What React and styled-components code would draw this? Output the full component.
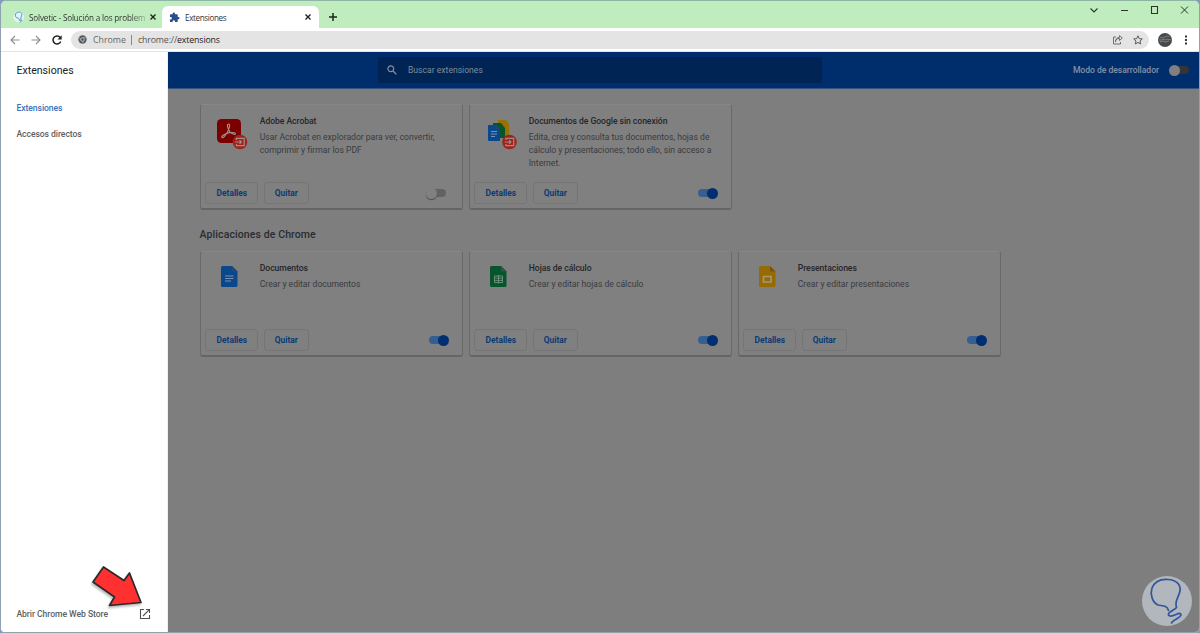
import React from "react";
import styled, { createGlobalStyle, css } from "styled-components";

const Global = createGlobalStyle`
  *{box-sizing:border-box}
  html,body{margin:0;padding:0}
  body{background:#7f9cc0;font-family:Roboto,"Liberation Sans",sans-serif;overflow:hidden}
  svg{display:block;flex:none}
`;

const Window = styled.div`
  position:relative;width:1200px;height:633px;display:flex;flex-direction:column;
  border:1px solid #92a1b0;border-top-color:#8fb5a5;border-radius:6px 6px 5px 5px;overflow:hidden;background:#fff;
`;
const TabStrip = styled.div`
  height:27px;flex:none;background:#bfedbd;display:flex;align-items:flex-end;
  font-family:"Open Sans","Noto Sans",sans-serif;font-size:8.1px;color:#333;
`;
const Tab = styled.div`
  height:22px;display:flex;align-items:center;white-space:nowrap;
  width:${p => p.$width}px;padding:0 ${p => p.$right || 7}px 0 ${p => p.$left}px;gap:5px;
  ${p => p.$active && css`background:#fff;border-radius:6px 6px 0 0;`}
`;
const TabLabel = styled.span`
  flex:1;letter-spacing:${p => p.$spacing || 0}px;
  ${p => p.$fade && css`mask-image:linear-gradient(90deg,#000 87%,#0004);`}
`;
const NewTab = styled.div`height:22px;display:flex;align-items:center;padding-left:10px;`;
const WindowButtons = styled.div`
  margin-left:auto;align-self:flex-start;height:17px;display:flex;align-items:center;gap:20px;padding-right:10px;
`;
const Toolbar = styled.div`
  height:24px;flex:none;display:flex;align-items:center;background:#fff;padding:0 11px 0 9px;border-bottom:1px solid #e2e4e6;
`;
const NavButtons = styled.div`display:flex;gap:10.500px;width:61px;flex:none;`;
const Reload = styled.svg`margin-left:1px;`;
const Address = styled.div`
  height:18px;width:1078px;border-radius:9px;background:#e4e4e4;display:flex;align-items:center;padding:0 6px 0 7px;
  font-family:"Open Sans","Noto Sans",sans-serif;font-size:8.8px;color:#555;white-space:nowrap;
`;
const Scheme = styled.span`margin-left:6px;padding-right:5px;border-right:1px solid #888;line-height:10px;letter-spacing:0;color:#666;`;
const Url = styled.span`margin-left:6px;letter-spacing:-.14px;b{font-weight:400;color:#222}`;
const AddressActions = styled.div`margin-left:auto;display:flex;gap:10px;align-items:center;`;
const ProfileActions = styled.div`margin-left:auto;display:flex;gap:12px;align-items:center;`;

const Page = styled.div`flex:1;display:flex;min-height:0;`;
const Sidebar = styled.nav`
  width:167px;flex:none;background:#fff;display:flex;flex-direction:column;padding:11px 16px 10px 15.400px;
  border-right:1px solid #eeeff0;
`;
const SideTitle = styled.h1`margin:0 0 20.500px;font-size:10.6px;line-height:16px;font-weight:400;color:#202124;letter-spacing:0;`;
const SideLink = styled.a`
  font-size:8.6px;line-height:16px;margin-bottom:10px;font-weight:500;letter-spacing:-.06px;
  color:${p => (p.$active ? "#3c70b8" : "#5c5f63")};
`;
const StoreLink = styled.div`
  margin-top:auto;display:flex;align-items:center;justify-content:space-between;font-size:8.6px;line-height:16px;
  font-weight:500;color:#5c5f63;white-space:nowrap;letter-spacing:-.05px;
`;
const Main = styled.main`flex:1;background:#7e7e7e;display:flex;flex-direction:column;`;
const Header = styled.header`
  height:37px;flex:none;background:#002d6c;border-bottom:1px solid #33547f;display:flex;align-items:center;padding:0 10px 0 210px;
`;
const Search = styled.div`
  width:444px;height:26px;background:#002453;border-radius:2px;display:flex;align-items:center;gap:11px;padding-left:9px;
  font-size:8.6px;color:#7f8c9e;letter-spacing:0;
`;
const DevMode = styled.div`
  margin-left:auto;display:flex;align-items:center;gap:11px;color:#8491a5;font-size:8.6px;font-weight:500;letter-spacing:-.04px;
`;
const Content = styled.div`padding:15px 0 0 31.600px;`;
const Grid = styled.div`display:grid;grid-template-columns:repeat(3,263px);column-gap:6px;`;
const SectionTitle = styled.h2`
  margin:17px 0 8px;font-size:10.5px;line-height:16px;font-weight:500;color:#2a2c31;letter-spacing:.1px;
`;
const Card = styled.article`
  height:106px;border:1px solid #696969;border-top-color:#868686;border-bottom:2px solid #656565;
  border-radius:3px;background:#808080;display:flex;flex-direction:column;
`;
const CardBody = styled.div`display:flex;flex:none;height:77px;padding:9px 20px 0 14px;`;
const IconBox = styled.div`width:45.200px;flex:none;padding-top:5px;`;
const CardText = styled.div`white-space:nowrap;`;
const CardTitle = styled.h3`margin:0 0 3px;font-size:8.6px;line-height:14px;font-weight:500;color:#252629;letter-spacing:-.05px;`;
const CardCopy = styled.p`margin:0;font-size:8.6px;line-height:13px;color:#3a3b3f;letter-spacing:-.01px;`;
const CardFooter = styled.div`display:flex;gap:5.400px;align-items:center;padding:0 14px 0 4.800px;`;
const Button = styled.button`
  height:22px;width:${p => p.$width}px;border:1px solid #757575;border-radius:3px;background:transparent;padding:0;
  font:700 8.4px Roboto,sans-serif;color:#0b3b74;
`;
const Track = styled.span`
  display:flex;align-items:center;width:19px;height:8px;border-radius:4px;
  background:${p => p.$track};justify-content:${p => (p.$on ? "flex-end" : "flex-start")};
  &::before{content:"";width:11px;height:11px;border-radius:50%;flex:none;background:${p => p.$knob};
  margin:0 -1px;box-shadow:0 1px 1px ${p => p.$shade || "transparent"};}
`;
const ToggleSlot = styled.span`margin-left:auto;padding-right:${p => (p.$on ? 0 : 2)}px;`;
const Arrow = styled.svg`position:absolute;left:87px;top:562px;filter:drop-shadow(-1px 2px 1px #0004);`;
const Watermark = styled.svg`position:absolute;left:1140px;top:574px;`;
const DesktopEdge = styled.div`position:absolute;left:191px;right:218px;bottom:-1px;height:1px;background:#6654a0;`;

const Cross = ({ size = 6, width = 1.4 }) => (
  <svg width={size} height={size} viewBox="0 0 6 6"><path d="M.5.5l5 5M5.5.5l-5 5" stroke="#222" strokeWidth={width} /></svg>
);
const Bulb = ({ color, width }) => (
  <path d="M27.500 35.500C26 30 21 31 17 30C11 27 9 19 11 13C14 6 21 4 27 4.500C35 5 40 9 39 16C38 21 35 24 35 29C35 33 37 32 33 34.500C27 38 26 40 29 41C33 42 39 36 40 39.500C40 43 31 45 30.500 48" fill="none" stroke={color} strokeWidth={width} strokeLinecap="round" strokeLinejoin="round" />
);
const ArrowIcon = ({ right }) => (
  <svg width="10" height="10" viewBox="0 0 10 10">
    <path d={right ? "M.5 5H9M5 1l4 4-4 4" : "M9.5 5H1M5 1L1 5l4 4"} fill="none" stroke="#8a8d90" strokeWidth="1.1" />
  </svg>
);
const Badge = ({ x, y }) => (
  <g transform={`translate(${x} ${y})`}>
    <circle cx="8" cy="8" r="7.3" fill="#9e231b" />
    <path d="M4.4 6V4.3h7.8v7.4H4.4V10M3.2 8h6M7.6 6.2L9.4 8 7.6 9.8" fill="none" stroke="#a38b89" strokeWidth="1.2" />
  </g>
);
const AcrobatIcon = () => (
  <svg width="34" height="34" viewBox="0 0 34 34">
    <rect x="2" y="0" width="24" height="24" rx="4.4" fill="#7c0000" />
    <path d="M13.2 5.2c2.700-.6 1 5.200-1 8.300-1.500 2.500-4 6-5.200 5-1.300-1.200 3.200-3.800 6.500-4.600 3-.8 7.200-.5 7 1-.3 1.600-4-.3-5.700-2.300-1.700-2.100-3.300-6.800-1.600-7.400z" fill="none" stroke="#a08d8d" strokeWidth="1.15" />
    <Badge x="17" y="15" />
  </svg>
);
const OfflineDocsIcon = () => (
  <svg width="34" height="34" viewBox="0 0 34 34">
    <path d="M14 1h8l3 4v14H14z" fill="#987004" />
    <path d="M9 4h8l4 5v10H9z" fill="#07552d" />
    <path d="M4 7q0-1 1-1h7l4 4v12H5q-1 0-1-1z" fill="#0b488b" />
    <path d="M12 6l4 4h-4z" fill="#264770" />
    <path d="M7 12.500h6M7 15h6M7 17.500h4" stroke="#7890b1" />
    <Badge x="17.500" y="15" />
  </svg>
);
const FileIcon = ({ kind }) => {
  const colors = { doc: ["#0b488b", "#244974"], sheet: ["#07552d", "#285841"], slide: ["#966b04", "#765215"] };
  return (
    <svg width="30" height="30" viewBox="0 0 30 30">
      <path d="M7.500 0H17l5.500 5.500v14q0 1.500-1.500 1.500H7.500Q6 21 6 19.500v-18Q6 0 7.500 0z" fill={colors[kind][0]} />
      <path d="M17 0l5.500 5.500H17z" fill={colors[kind][1]} />
      {kind === "doc" && <path d="M10 10h8.500M10 12.500h8.500M10 15h6" stroke="#7890b1" />}
      {kind === "sheet" && <path d="M10.500 10h8v6.500h-8zM10.500 12.200h8M10.500 14.400h8M14.500 9v8.500" fill="none" stroke="#719481" strokeWidth=".9" />}
      {kind === "slide" && <path d="M10.500 10.500h7.500v5.500h-7.500z" fill="none" stroke="#a4977b" strokeWidth="1.6" />}
    </svg>
  );
};
const Toggle = ({ on }) => (
  <ToggleSlot $on={on}>
    <Track $on={on} $track={on ? "#355e91" : "#626265"} $knob={on ? "#002e70" : "#808080"} $shade={on ? "transparent" : "#4a4a4a"} />
  </ToggleSlot>
);
const Extension = ({ icon, title, lines, on = true }) => (
  <Card>
    <CardBody>
      <IconBox>{icon}</IconBox>
      <CardText>
        <CardTitle>{title}</CardTitle>
        <CardCopy>{lines.map(l => <React.Fragment key={l}>{l}<br /></React.Fragment>)}</CardCopy>
      </CardText>
    </CardBody>
    <CardFooter><Button $width={53}>Detalles</Button><Button $width={45}>Quitar</Button><Toggle on={on} /></CardFooter>
  </Card>
);

export default function App() {
  return (
    <>
      <Global />
      <Window>
        <TabStrip>
          <Tab $width={161} $left={12}>
            <svg width="11" height="12" viewBox="0 0 48 52"><circle cx="25" cy="25" r="24" fill="#e2f4f4" /><Bulb color="#4b8fc4" width="4" /></svg>
            <TabLabel $fade $spacing={-0.15}>Solvetic - Solución a los problem</TabLabel><Cross />
          </Tab>
          <Tab $active $width={157} $left={7} $right={8}>
            <svg width="11" height="11" viewBox="0 0 24 24"><path d="M20.500 11H19V7c0-1.100-.9-2-2-2h-4V3.500a2.500 2.500 0 0 0-5 0V5H4c-1.100 0-2 .9-2 2v3.800h1.500a2.700 2.700 0 0 1 0 5.400H2V20c0 1.100.9 2 2 2h3.800v-1.500a2.700 2.700 0 0 1 5.400 0V22H17c1.100 0 2-.9 2-2v-4h1.500a2.500 2.500 0 0 0 0-5z" fill="#2b4d8c" /></svg>
            <TabLabel $spacing={-0.36}>Extensiones</TabLabel><Cross />
          </Tab>
          <NewTab><svg width="8" height="8" viewBox="0 0 8 8"><path d="M4 0v8M0 4h8" stroke="#222" strokeWidth="1.5" /></svg></NewTab>
          <WindowButtons>
            <svg width="10" height="8" viewBox="0 0 10 8"><path d="M1.500 2.500L5 6l3.500-3.500" fill="none" stroke="#333" strokeWidth="1.100" /></svg>
            <svg width="10" height="8" viewBox="0 0 10 8"><path d="M2 4.500h7" stroke="#333" /></svg>
            <svg width="10" height="8" viewBox="0 0 10 8"><path d="M2.500.5h6v7h-6z" fill="none" stroke="#333" strokeWidth="1.100" /></svg>
            <svg width="10" height="8" viewBox="0 0 10 8"><path d="M2 .5l7 7M9 .5l-7 7" stroke="#333" /></svg>
          </WindowButtons>
        </TabStrip>
        <Toolbar>
          <NavButtons>
            <ArrowIcon /><ArrowIcon right />
            <Reload width="10" height="10" viewBox="0 0 10 10"><path d="M8.700 6.500A4 4 0 1 1 8.200 2.500" fill="none" stroke="#222" strokeWidth="1.500" /><path d="M9.700.3v4.200H5.500z" fill="#222" /></Reload>
          </NavButtons>
          <Address>
            <svg width="9" height="9" viewBox="0 0 10 10"><circle cx="5" cy="5" r="4.600" fill="#55585c" /><circle cx="5" cy="5" r="2" fill="#55585c" stroke="#d6d6d6" strokeWidth=".8" /><path d="M5 3h4.200M3.300 6L1.200 2.500M6.700 6L4.600 9.500" stroke="#c4c4c4" strokeWidth=".6" /></svg>
            <Scheme>Chrome</Scheme><Url>chrome://<b>extensions</b></Url>
            <AddressActions>
              <svg width="11" height="10" viewBox="0 0 11 10"><path d="M4 2H1.500v7h7V7M3.500 7c0-2.500 1.500-3.500 4-3.500V5.500L10.300 3 7.500.6v1.700C4.500 2.500 3.500 4.500 3.500 7z" fill="none" stroke="#5f6368" strokeWidth=".9" /></svg>
              <svg width="10" height="10" viewBox="0 0 24 24"><path d="M12 2l3 6.800 7.300.7-5.500 4.900 1.600 7.200L12 17.800l-6.400 3.800 1.600-7.200-5.500-4.900L9 8.800z" fill="none" stroke="#505459" strokeWidth="2.300" /></svg>
            </AddressActions>
          </Address>
          <ProfileActions>
            <svg width="14" height="14" viewBox="0 0 14 14"><circle cx="7" cy="7" r="7" fill="#46484a" /><path d="M2 5c2-2 3 1 5-1s3 0 5-1M1 7h3l1-1 2 1 2-1 4 1M2 9l3-1 2 1 4-1" fill="none" stroke="#8e9193" strokeWidth=".8" /></svg>
            <svg width="4" height="10" viewBox="0 0 4 10"><path d="M1 .5h2v2H1zM1 4h2v2H1zM1 7.500h2v2H1z" fill="#333" /></svg>
          </ProfileActions>
        </Toolbar>
        <Page>
          <Sidebar>
            <SideTitle>Extensiones</SideTitle>
            <SideLink $active>Extensiones</SideLink>
            <SideLink>Accesos directos</SideLink>
            <StoreLink>Abrir Chrome Web Store
              <svg width="12" height="12" viewBox="0 0 12 12"><path d="M5 1.500H1.500v9h9V7M7 1.500h3.500V5M10.300 1.700L4 8" fill="none" stroke="#4d5054" strokeWidth="1.100" /></svg>
            </StoreLink>
          </Sidebar>
          <Main>
            <Header>
              <Search>
                <svg width="10" height="10" viewBox="0 0 10 10"><circle cx="3.800" cy="3.800" r="2.900" fill="none" stroke="#8490a0" strokeWidth="1.200" /><path d="M6 6l3.400 3.400" stroke="#8490a0" strokeWidth="1.300" /></svg>
                Buscar extensiones
              </Search>
              <DevMode>Modo de desarrollador<Track $track="#353437" $knob="#808080" /></DevMode>
            </Header>
            <Content>
              <Grid>
                <Extension icon={<AcrobatIcon />} title="Adobe Acrobat" lines={["Usar Acrobat en explorador para ver, convertir,", "comprimir y firmar los PDF"]} on={false} />
                <Extension icon={<OfflineDocsIcon />} title="Documentos de Google sin conexión" lines={["Edita, crea y consulta tus documentos, hojas de", "cálculo y presentaciones; todo ello, sin acceso a", "Internet."]} />
              </Grid>
              <SectionTitle>Aplicaciones de Chrome</SectionTitle>
              <Grid>
                <Extension icon={<FileIcon kind="doc" />} title="Documentos" lines={["Crear y editar documentos"]} />
                <Extension icon={<FileIcon kind="sheet" />} title="Hojas de cálculo" lines={["Crear y editar hojas de cálculo"]} />
                <Extension icon={<FileIcon kind="slide" />} title="Presentaciones" lines={["Crear y editar presentaciones"]} />
              </Grid>
            </Content>
          </Main>
        </Page>
        <Arrow width="60" height="48" viewBox="0 0 60 48"><path d="M15.500 4L36 17.500 41.500 10 53 39.500 21.500 42.500 26.500 34 5 19z" fill="#ff3030" stroke="#2b292c" strokeWidth="1.700" strokeLinejoin="round" /></Arrow>
        <Watermark width="52" height="52" viewBox="0 0 52 52"><circle cx="26" cy="26" r="25" fill="#b1b7bd" /><Bulb color="#33559b" width="1.700" /></Watermark>
        <DesktopEdge />
      </Window>
    </>
  );
}
